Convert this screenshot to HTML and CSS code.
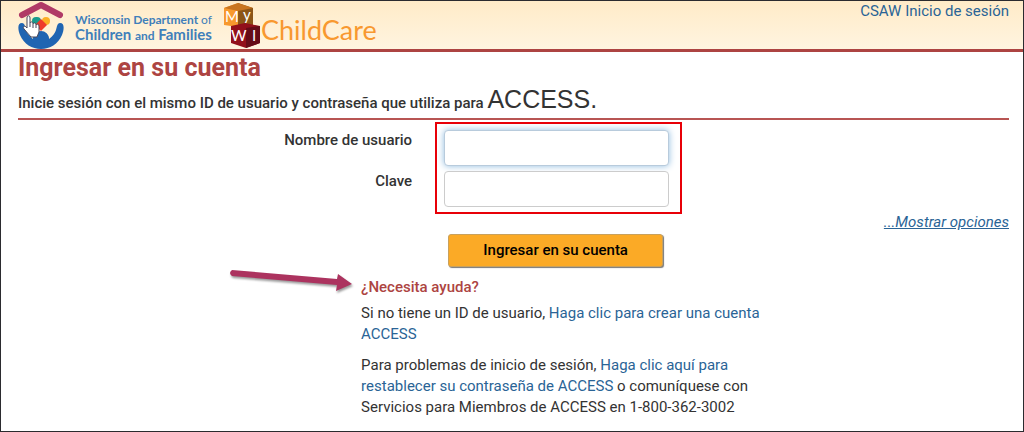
FILE: index.html
```html
<!DOCTYPE html>
<html lang="es">

<head>
    <meta charset="UTF-8">
    <meta name="viewport" content="width=device-width, initial-scale=1.0">
    <title>Ingresar en su cuenta</title>
    <link rel="stylesheet" href="styles.css">
</head>

<body>

    <header class="header">
        <div class="dcf-logo">
            <svg class="dcf-icon" viewBox="0 0 46 48" aria-hidden="true">
                <path d="M4 14 23 4 42 14" fill="none" stroke="#b03a66" stroke-width="6" stroke-linejoin="round" stroke-linecap="round" />
                <path d="M4 22C-1 22 0 29 2 34C6 43 14 48 23 48S40 43 44 34C46 29 47 22 42 22C39 22 39 26 38 29C37 32 35 35 31 38A8 8 0 0 0 15 38C11 35 9 32 8 29C7 26 7 22 4 22Z" fill="#2065b2" />
                <circle cx="23" cy="39" r="8" fill="#2065b2" />
                <rect x="14" y="16" width="9" height="8" rx="4" fill="#189b8c" />
                <circle cx="28" cy="20" r="4" fill="#fcae25" />
                <path d="M23 18 29 24 23 30 17 24Z" fill="#ee3a2c" />
                <path d="M13 36 6 28C4 25 7 24 9 27L9 17C9 14 12 14 12 17V22C13 20 15 21 15 23C16 21 18 22 18 24C20 22 21 24 21 26V31L19 36Z" fill="#fff" stroke="#45465c" stroke-width="1" />
                <path d="M12 22V26M15 23V27M18 24V27" stroke="#45465c" />
            </svg>
            <div class="dcf-name">
                <div>Wisconsin Department <span class="light">of</span></div>
                <div class="dcf-big">Children <span class="small">and</span> Families</div>
            </div>
        </div>
        <div class="care-logo">
            <svg class="cubes" viewBox="0 0 38 46" aria-hidden="true">
                <path d="M1 5 15 0 15 24 1 22Z" fill="#f7982d" />
                <path d="M15 0 30 5V22L15 24Z" fill="#8c5517" />
                <path d="M1 5 15 0 30 5 15 8Z" fill="#c9751f" />
                <path d="M8 23 22 20 37 23V40L23 45 8 40Z" fill="#92101b" />
                <path d="M23 25 37 23V40L23 45Z" fill="#650c18" />
                <text x="2" y="19" class="cube-letter">M</text>
                <text x="20" y="17" class="cube-letter">y</text>
                <text x="8" y="38" class="cube-letter">W</text>
                <text x="29" y="38" class="cube-letter">I</text>
            </svg>
            <span class="care-name">ChildCare</span>
        </div>
        <a class="csaw" href="#">CSAW Inicio de sesión</a>
    </header>

    <main class="main">
        <h1 class="title">Ingresar en su cuenta</h1>
        <p class="intro">Inicie sesión con el mismo ID de usuario y contraseña que utiliza para <span class="access">ACCESS.</span></p>

        <form class="login">
            <div class="fields">
                <div class="row">
                    <label class="label" for="user">Nombre de usuario</label>
                    <input class="input focused" id="user" type="text">
                </div>
                <div class="row">
                    <label class="label" for="password">Clave</label>
                    <input class="input" id="password" type="password">
                </div>
                <div class="highlight"></div>
            </div>
            <div class="options"><a href="#">...Mostrar opciones</a></div>
            <button class="submit" type="button">Ingresar en su cuenta</button>
        </form>

        <section class="help">
            <svg class="arrow" viewBox="0 0 135 30" aria-hidden="true">
                <path d="M6 3 111 12 112 7 126 17 110 24 111 18 6 9Q2 6 6 3Z" fill="#ac335f" />
            </svg>
            <div class="help-text">
                <h2 class="help-title">¿Necesita ayuda?</h2>
                <p>Si no tiene un ID de usuario, <a href="#">Haga clic para crear una cuenta ACCESS</a></p>
                <p>Para problemas de inicio de sesión, <a href="#">Haga clic aquí para restablecer su contraseña de ACCESS</a> o comuníquese con Servicios para Miembros de ACCESS en 1-800-362-3002</p>
            </div>
        </section>
    </main>

</body>

</html>
```

FILE: styles.css
```css
* {
    box-sizing: border-box;
}

body {
    margin: 0;
    min-height: 100vh;
    border: 1px solid #2b2b2f;
    background: #fff;
    color: #333;
    font-family: Roboto, Arial, sans-serif;
    font-size: 15px;
    line-height: 21px;
}

a {
    color: #2a6496;
    text-decoration: none;
}

/* Header */
.header {
    display: flex;
    align-items: flex-start;
    padding: 0 14px 0 17px;
    background: linear-gradient(#ffebc8, #fff4e0);
    border-bottom: 3px solid #ad4442;
}

.dcf-logo {
    display: flex;
    align-items: center;
    gap: 11px;
}

.dcf-icon {
    width: 46px;
    height: 48px;
}

.dcf-name {
    padding-top: 4px;
    color: #3f7fba;
    font-family: Lato, sans-serif;
    font-size: 12px;
    font-weight: bold;
    line-height: 15px;
    white-space: nowrap;
}

.dcf-big {
    font-size: 15px;
}

.light {
    font-weight: normal;
}

.small {
    font-size: 12px;
}

.care-logo {
    display: flex;
    margin-left: 11px;
    padding-top: 2px;
}

.cubes {
    width: 38px;
    height: 46px;
}

.cube-letter {
    fill: #fff;
    font-family: Lato, sans-serif;
    font-size: 15px;
}

.care-name {
    height: 46px;
    color: #f8982f;
    font-family: Lato, sans-serif;
    font-size: 27px;
    line-height: 54px;
}

.csaw {
    margin-left: auto;
}

/* Login */
.main {
    padding: 0 14px 0 17px;
}

.title {
    margin: 0;
    color: #ad4442;
    font-size: 25px;
    font-weight: bold;
    line-height: 32px;
}

.intro {
    margin: 0;
    border-bottom: 2px solid #b85553;
    font-weight: 500;
    line-height: 30px;
}

.access {
    font-family: "Liberation Sans", Arial, sans-serif;
    font-size: 25px;
    font-weight: normal;
}

.fields {
    position: relative;
    display: grid;
    gap: 5px;
    padding-top: 10px;
}

.row {
    display: grid;
    grid-template-columns: 43% 1fr;
}

.label {
    padding-right: 32px;
    font-weight: 500;
    text-align: right;
}

.input {
    width: 225px;
    height: 36px;
    padding: 6px 12px;
    border: 1px solid #ccc;
    border-radius: 4px;
    font: inherit;
}

.focused {
    border-color: #b8cbdc;
    box-shadow: 0 0 7px #8fbbdf;
}

/* Red frame over both inputs */
.highlight {
    position: absolute;
    top: 2px;
    bottom: -7px;
    left: 43%;
    width: 247px;
    margin-left: -9px;
    border: 2px solid #e80008;
    pointer-events: none;
}

.options {
    padding: 5px 0 1px;
    text-align: right;
}

.options a {
    font-style: italic;
    text-decoration: underline;
}

.submit {
    display: block;
    width: 215px;
    height: 33px;
    margin-left: calc(43% + 4px);
    border: 1px solid #c9a15c;
    border-radius: 3px;
    background: #fbaa26;
    box-shadow: 1px 1px 1px #777;
    color: #000;
    font: inherit;
    font-weight: 500;
}

/* Help */
.help {
    display: flex;
    padding-top: 10px;
}

.arrow {
    flex: none;
    width: 135px;
    height: 30px;
    margin: -10px 0 0 21%;
    filter: drop-shadow(1px 2px 1px #999);
}

.help-text {
    max-width: 402px;
}

.help-title {
    margin: 0 0 5px;
    color: #ad4442;
    font-size: 15px;
    font-weight: 500;
}

.help-text p {
    margin: 0 0 10px;
}
```
